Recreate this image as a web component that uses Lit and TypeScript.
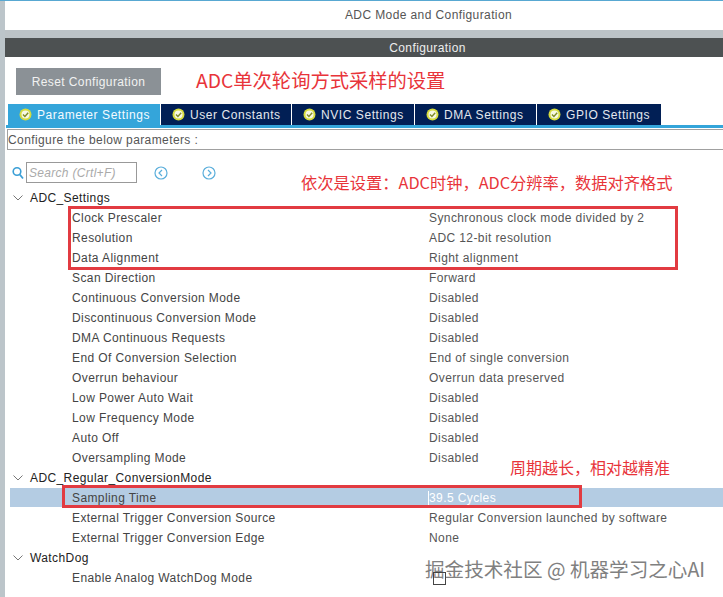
import { LitElement, html, css, svg } from "lit";
import { customElement } from "lit/decorators.js";

const sections = [
  { title: "ADC_Settings", rows: [
    ["Clock Prescaler", "Synchronous clock mode divided by 2"],
    ["Resolution", "ADC 12-bit resolution"],
    ["Data Alignment", "Right alignment"],
    ["Scan Direction", "Forward"],
    ["Continuous Conversion Mode", "Disabled"],
    ["Discontinuous Conversion Mode", "Disabled"],
    ["DMA Continuous Requests", "Disabled"],
    ["End Of Conversion Selection", "End of single conversion"],
    ["Overrun behaviour", "Overrun data preserved"],
    ["Low Power Auto Wait", "Disabled"],
    ["Low Frequency Mode", "Disabled"],
    ["Auto Off", "Disabled"],
    ["Oversampling Mode", "Disabled"],
  ]},
  { title: "ADC_Regular_ConversionMode", rows: [
    ["Sampling Time", "39.5 Cycles"],
    ["External Trigger Conversion Source", "Regular Conversion launched by software"],
    ["External Trigger Conversion Edge", "None"],
  ]},
  { title: "WatchDog", rows: [
    ["Enable Analog WatchDog Mode", ""],
  ]},
];

const tabs = [
  ["Parameter Settings", 152],
  ["User Constants", 130],
  ["NVIC Settings", 122],
  ["DMA Settings", 121],
  ["GPIO Settings", 124],
] as const;

const check = html`<svg class="check" viewBox="0 0 13 13" width="13" height="13">
  <circle cx="6.5" cy="6.5" r="6" fill="#d6dc3e"/>
  <circle cx="6.5" cy="6.5" r="4" fill="#f7f8e4"/>
  <path d="M4 6.5 L5.9 8.4 L9.2 4.7" fill="none" stroke="#7f8c28" stroke-width="1.4"/>
</svg>`;

const chevron = html`<svg class="chev" viewBox="0 0 10 6" width="10" height="6">
  <path d="M0.5 0.5 L5 5 L9.5 0.5" fill="none" stroke="#777" stroke-width="1"/>
</svg>`;

const nav = (d: string) => html`<svg viewBox="0 0 14 14" width="14" height="14">
  <circle cx="7" cy="7" r="6" fill="none" stroke="#5aaedb" stroke-width="1.2"/>
  ${svg`<path d=${d} fill="none" stroke="#5aaedb" stroke-width="1.2"/>`}
</svg>`;

@customElement("app-root")
export class AppRoot extends LitElement {
  static styles = css`
    :host {
      display: block;
      position: relative;
      width: 723px;
      height: 597px;
      overflow: hidden;
      background: #fff;
      font-family: "Liberation Sans", Arial, sans-serif;
      font-size: 12px;
      color: #444;
      letter-spacing: 0.4px;
    }
    .topline { height: 1px; background: #58a8d2; }
    .frame { display: flex; height: 596px; }
    .strip { width: 5px; flex: none; background: #bcc5ca; }
    .main { flex: 1; min-width: 0; }
    .title { height: 29px; display: flex; align-items: center; justify-content: center; color: #555; padding-left: 129px; padding-bottom: 1px; box-sizing: border-box; }
    .gap { height: 8px; background: #bcc3c7; }
    .band { height: 19px; background: #4d5152; color: #eee; display: flex; align-items: center; justify-content: center; padding-left: 127px; }
    .resetrow { padding: 11px 0 0 11px; height: 36px; box-sizing: content-box; }
    .reset { width: 145px; height: 27px; background: #8b9196; color: #f1f1f1; display: flex; align-items: center; justify-content: center; }
    .tabs { display: flex; gap: 1px; margin-left: 3px; height: 21px; letter-spacing: 0.57px; }
    .tab { background: #011f55; color: #e4e8ee; display: flex; align-items: center; box-sizing: border-box; padding-left: 11px; gap: 5px; }
    .tab.active { background: #34a5da; color: #f4fbff; }
    .check { flex: none; }
    .tabline { height: 3px; background: #34a5da; margin-left: 1px; }
    .config { margin: 1px 0 0 2px; height: 21px; box-sizing: border-box; border: 1px solid #a0a0a0; border-right: none; display: flex; align-items: center; color: #555; }
    .searchrow { display: flex; align-items: center; height: 21px; margin-top: 12px; padding-left: 7px; }
    .searchrow .mag { flex: none; margin-right: 2px; }
    .search { width: 111px; height: 21px; box-sizing: border-box; border: 1px solid #999; color: #aaa; font-style: italic; display: flex; align-items: center; padding-left: 2px; letter-spacing: 0.3px; }
    .navs { display: flex; margin-left: 17px; gap: 34px; }
    .navs svg { display: block; }
    .tree { margin-top: 5px; }
    .head { height: 20px; display: flex; align-items: center; color: #222; padding-left: 8px; gap: 7px; }
    .row { height: 20px; display: grid; grid-template-columns: 357px 1fr; padding-left: 67px; align-items: center; color: #444; }
    .row .val { color: #555; }
    .row.sel { background: #b4cce3; margin-left: 5px; padding-left: 62px; height: 19px; margin-bottom: 1px; }
    .row.sel .val { color: #fff; border-left: 1px solid #fff; margin-left: -1px; }
    .note { position: absolute; color: #e8343a; font-family: "Noto Sans CJK SC", sans-serif; letter-spacing: 0; white-space: nowrap; line-height: 1; }
    .n1 { left: 196px; top: 71px; font-size: 19.3px; }
    .n2 { left: 301px; top: 174px; font-size: 16.25px; }
    .n3 { left: 510px; top: 459px; font-size: 16px; }
    .box { position: absolute; border: 3px solid #e23b41; box-sizing: border-box; }
    .b1 { left: 68px; top: 206px; width: 610px; height: 64px; }
    .b2 { left: 62px; top: 485px; width: 520px; height: 23px; }
    .mark { position: absolute; left: 425px; top: 559px; font-family: "Noto Sans CJK SC", sans-serif; font-size: 19.6px; line-height: 1; color: #808080; letter-spacing: 0; white-space: nowrap; text-shadow: 1px 1px 0 #fff; }
    .cursor { position: absolute; left: 433px; top: 572px; width: 11px; height: 11px; border: 1px solid #444; }
  `;

  render() {
    return html`
      <div class="topline"></div>
      <div class="frame">
        <div class="strip"></div>
        <div class="main">
          <div class="title">ADC Mode and Configuration</div>
          <div class="gap"></div>
          <div class="band">Configuration</div>
          <div class="resetrow"><div class="reset">Reset Configuration</div></div>
          <div class="tabs">
            ${tabs.map(([name, w], i) => html`
              <div class="tab ${i === 0 ? "active" : ""}" style="width:${w}px">${check}<span>${name}</span></div>`)}
          </div>
          <div class="tabline"></div>
          <div class="config">Configure the below parameters :</div>
          <div class="searchrow">
            <svg class="mag" viewBox="0 0 12 14" width="12" height="14">
              <circle cx="5" cy="5.5" r="3.8" fill="none" stroke="#3b9fd6" stroke-width="1.6"/>
              <path d="M7.8 8.5 L11 12.5" stroke="#3b9fd6" stroke-width="1.8"/>
            </svg>
            <div class="search">Search (Crtl+F)</div>
            <div class="navs">
              ${nav("M8 4 L5 7 L8 10")}
              ${nav("M6 4 L9 7 L6 10")}
            </div>
          </div>
          <div class="tree">
            ${sections.map(s => html`
              <div class="head">${chevron}<span>${s.title}</span></div>
              ${s.rows.map(([k, v]) => html`
                <div class="row ${k === "Sampling Time" ? "sel" : ""}"><span>${k}</span><span class="val">${v}</span></div>`)}
            `)}
          </div>
        </div>
      </div>
      <div class="note n1">ADC单次轮询方式采样的设置</div>
      <div class="note n2">依次是设置：ADC时钟，ADC分辨率，数据对齐格式</div>
      <div class="note n3">周期越长，相对越精准</div>
      <div class="box b1"></div>
      <div class="box b2"></div>
      <div class="mark">掘金技术社区 @ 机器学习之心AI</div>
      <div class="cursor"></div>
    `;
  }
}
